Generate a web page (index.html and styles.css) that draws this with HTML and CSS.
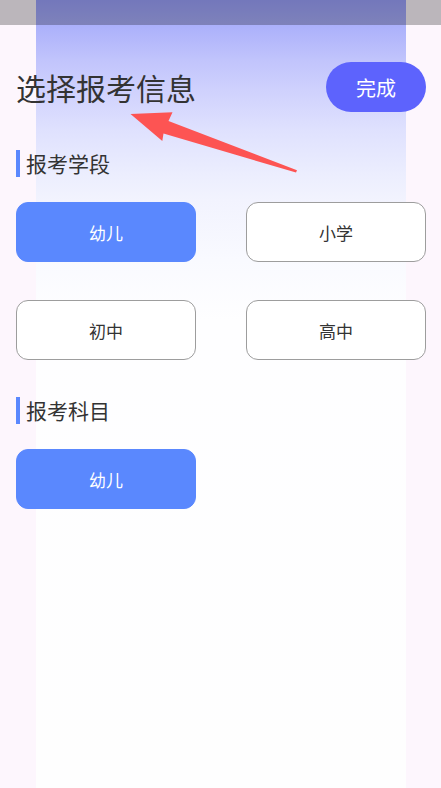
FILE: index.html
```html
<!DOCTYPE html>
<html lang="zh-CN">
<head>
    <meta charset="UTF-8">
    <meta name="viewport" content="width=device-width, initial-scale=1.0">
    <title>选择报考信息</title>
    <link rel="stylesheet" href="styles.css">
</head>
<body>
    <div class="glow"></div>

    <div class="page">
        <div class="top">
            <h1 class="title">选择报考信息</h1>
            <button class="done">完成</button>
        </div>

        <section class="block">
            <div class="block-head">报考学段</div>
            <div class="opts">
                <button class="opt on">幼儿</button>
                <button class="opt">小学</button>
                <button class="opt">初中</button>
                <button class="opt">高中</button>
            </div>
        </section>

        <section class="block">
            <div class="block-head">报考科目</div>
            <div class="opts">
                <button class="opt on">幼儿</button>
            </div>
        </section>
    </div>

    <!-- note arrow drawn over the screen -->
    <svg class="arrow" width="441" height="788" viewBox="0 0 441 788">
        <polygon fill="#fd5453" points="130.5,114 172.5,112.3 168.5,121 297,170.3 296,172.6 163.5,133.5 162.3,141"/>
    </svg>

    <div class="statusbar"></div>
</body>
</html>
```

FILE: styles.css
```css
html, body {
    margin: 0;
    padding: 0;
}

body {
    position: relative;
    min-height: 788px;
    background-color: #fdf6fd;
    font-family: "Noto Sans CJK SC", "Noto Sans", sans-serif;
    color: #333;
    overflow: hidden;
}

.glow {
    position: absolute;
    top: 0;
    left: 36px;
    width: 370px;
    height: 788px;
    background: linear-gradient(to bottom,
        #9ca2fd 0,
        #abb0fb 25px,
        #c1c4fc 60px,
        #cfd1fd 90px,
        #dfe1fe 130px,
        #eceefe 175px,
        #f2f3fe 200px,
        #f9faff 260px,
        #fefeff 320px,
        #fefefe 100%);
}

.page {
    position: relative;
    padding: 62px 15px 0 16px;
}

.top {
    display: flex;
    align-items: center;
    justify-content: space-between;
    height: 50px;
}

.title {
    margin: 0;
    font-size: 30px;
    font-weight: normal;
    line-height: 50px;
    color: #333;
}

.done {
    width: 100px;
    height: 50px;
    border: none;
    border-radius: 25px;
    background-color: #5d63fd;
    color: #fff;
    font-family: inherit;
    font-size: 20px;
    padding: 0;
}

.block {
    margin-top: 38px;
}

.block + .block {
    margin-top: 37px;
}

.block-head {
    display: flex;
    align-items: center;
    height: 27px;
    font-size: 21px;
    line-height: 27px;
    color: #333;
}

.block-head::before {
    content: "";
    width: 4px;
    height: 27px;
    margin-right: 6px;
    background-color: #5a88fe;
}

.opts {
    display: grid;
    grid-template-columns: 180px 180px;
    justify-content: space-between;
    row-gap: 38px;
    margin-top: 25px;
}

.opt {
    height: 60px;
    border: 1px solid #9d9d9d;
    border-radius: 12px;
    background-color: #fff;
    color: #333;
    font-family: inherit;
    font-size: 17px;
    padding: 0;
}

.opt.on {
    border-color: #5a88fe;
    background-color: #5a88fe;
    color: #fff;
}

.arrow {
    position: absolute;
    top: 0;
    left: 0;
}

.statusbar {
    position: absolute;
    top: 0;
    left: 0;
    width: 441px;
    height: 25px;
    background-color: rgba(0, 0, 0, 0.26);
}
```
